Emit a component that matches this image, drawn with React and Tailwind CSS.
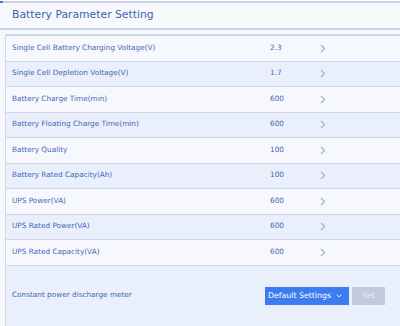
import React from "react";

const rows = [
  ["Single Cell Battery Charging Voltage(V)", "2.3"],
  ["Single Cell Depletion Voltage(V)", "1.7"],
  ["Battery Charge Time(min)", "600"],
  ["Battery Floating Charge Time(min)", "600"],
  ["Battery Quality", "100"],
  ["Battery Rated Capacity(Ah)", "100"],
  ["UPS Power(VA)", "600"],
  ["UPS Rated Power(VA)", "600"],
  ["UPS Rated Capacity(VA)", "600"],
];

function Chevron() {
  return (
    <svg width="6" height="9" viewBox="0 0 6 9" fill="none">
      <path d="M1 1l3.5 3.5L1 8" stroke="#9fb0d6" strokeWidth="1.2" />
    </svg>
  );
}

export default function App() {
  return (
    <div
      className="w-[400px] h-[326px] overflow-hidden bg-[#f6f8fc] flex flex-col"
      style={{ fontFamily: '"DejaVu Sans", Verdana, sans-serif' }}
    >
      <div className="h-[1px] bg-white" />
      <div className="h-[2px] bg-[#c9d4ea] flex">
        <div className="w-[3px] bg-[#4a78d0]" />
      </div>
      <div className="h-[25px] flex items-center pl-[12px] text-[10.8px] text-[#4063b0] bg-[#f6f8fc]">
        Battery Parameter Setting
      </div>
      <div className="h-[2px] bg-[#c9d5ec]" />
      <div className="h-[4px] bg-[#f6f8fc]" />
      <div className="flex-1 ml-[5px] border-l border-t-2 border-[#cdd7ec] flex flex-col">
        {rows.map(([label, value], i) => (
          <div
            key={label}
            className={`h-[25.5px] shrink-0 flex items-center border-b border-[#cbd6ec] text-[7.3px] text-[#4468b8] whitespace-nowrap ${
              i % 2 === 0 ? "bg-[#f7f8fd]" : "bg-[#e9effb]"
            }`}
          >
            <div className="w-[264px] pl-[6px]">{label}</div>
            <div className="w-[50px]">{value}</div>
            <Chevron />
          </div>
        ))}
        <div className="flex-1 bg-[#e9effb] flex items-center text-[7.3px] text-[#4468b8] whitespace-nowrap">
          <div className="w-[259px] pl-[6px]">Constant power discharge meter</div>
          <div className="flex items-center gap-[3px] pt-[1px]">
            <div className="w-[84px] h-[18px] bg-[#3d7cf0] flex items-center pl-[3px] text-white text-[7.8px] gap-[5px]">
              <span>Default Settings</span>
              <svg width="6" height="4" viewBox="0 0 6 4" fill="none">
                <path d="M0.5 0.5L3 3l2.5-2.5" stroke="#e8efff" strokeWidth="1" />
              </svg>
            </div>
            <div className="w-[33px] h-[18px] bg-[#c2cadb] flex items-center justify-center text-[#e6eaf3] text-[7.8px]">
              Set
            </div>
          </div>
        </div>
      </div>
    </div>
  );
}
